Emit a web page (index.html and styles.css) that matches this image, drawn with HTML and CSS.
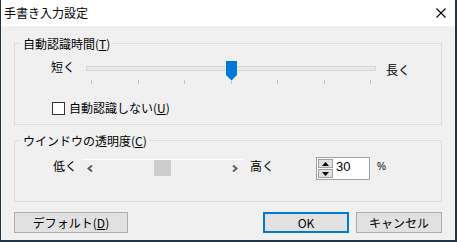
FILE: index.html
```html
<!DOCTYPE html>
<html lang="ja">
<head>
<meta charset="utf-8">
<link rel="stylesheet" href="styles.css">
</head>
<body>
<div class="window">
  <div class="titlebar">
    <span class="title">手書き入力設定</span>
    <svg class="close" width="10" height="10" viewBox="0 0 10 10"><path d="M0.5 0.5L9.5 9.5M9.5 0.5L0.5 9.5" stroke="#000" stroke-width="1.1" fill="none"/></svg>
  </div>
  <div class="content">
    <fieldset class="group g1">
      <legend>自動認識時間(<u>T</u>)</legend>
      <div class="slider-row">
        <span class="lbl lbl-short">短く</span>
        <div class="slider">
          <div class="track"></div>
          <svg class="thumb" width="11" height="19" viewBox="0 0 11 19"><polygon points="0,0 11,0 11,14 6,19 5,19 0,14" fill="#0078d7"/></svg>
          <div class="ticks"><i></i><i></i><i></i><i></i><i></i><i></i><i></i></div>
        </div>
        <span class="lbl lbl-long">長く</span>
      </div>
      <div class="check-row">
        <span class="box"></span>
        <span class="lbl">自動認識しない(<u>U</u>)</span>
      </div>
    </fieldset>
    <fieldset class="group g2">
      <legend>ウインドウの透明度(<u>C</u>)</legend>
      <div class="opacity-row">
        <span class="lbl lbl-low">低く</span>
        <div class="scrollbar">
          <span class="sb-btn"><svg width="7" height="7" viewBox="0 0 7 7"><path d="M5 0.5L1.5 3.5L5 6.5" stroke="#606060" stroke-width="2" fill="none"/></svg></span>
          <div class="sb-track"><span class="sb-thumb"></span></div>
          <span class="sb-btn"><svg width="7" height="7" viewBox="0 0 7 7"><path d="M2 0.5L5.5 3.5L2 6.5" stroke="#606060" stroke-width="2" fill="none"/></svg></span>
        </div>
        <span class="lbl lbl-high">高く</span>
        <div class="spin">
          <span class="spin-btn"><svg width="7" height="4" viewBox="0 0 7 4"><polygon points="3.5,0 7,4 0,4" fill="#000"/></svg></span>
          <span class="spin-btn"><svg width="7" height="4" viewBox="0 0 7 4"><polygon points="0,0 7,0 3.5,4" fill="#000"/></svg></span>
        </div>
        <div class="edit">30</div>
        <span class="pct">%</span>
      </div>
    </fieldset>
    <div class="buttons">
      <button class="btn btn-default">デフォルト(<u>D</u>)</button>
      <span class="spacer"></span>
      <button class="btn btn-ok">OK</button>
      <button class="btn btn-cancel">キャンセル</button>
    </div>
  </div>
</div>
</body>
</html>
```

FILE: styles.css
```css
* { box-sizing: border-box; }
html, body {
  margin: 0;
  padding: 0;
  width: 457px;
  height: 242px;
  overflow: hidden;
  background: #243447;
}
body {
  font-family: "Noto Sans CJK JP", "Noto Sans", sans-serif;
  font-size: 12px;
  color: #000;
}
.window {
  margin-left: 1px;
  width: 454px;
  height: 240px;
  background: #f0f0f0;
  display: flex;
  flex-direction: column;
}
.titlebar {
  height: 26px;
  background: #fff;
  display: flex;
  align-items: center;
  padding-left: 3px;
  padding-right: 9px;
}
.title {
  font-size: 12px;
  line-height: 16px;
  flex: 1;
}
.close { display: block; }
.content {
  padding: 9px 13px 0 13px;
  display: flex;
  flex-direction: column;
}
.group {
  margin: 0;
  border: 1px solid #dcdcdc;
  padding: 0;
  min-width: 0;
}
.group legend {
  margin-left: 6px;
  padding: 0 2px;
  line-height: 17px;
  height: 17px;
}
.lbl { line-height: 16px; white-space: nowrap; }
.g1 { padding-top: 7px; padding-bottom: 8px; }
.slider-row {
  display: flex;
  align-items: flex-start;
  height: 26px;
  margin-left: 36px;
}
.lbl-short { width: 35px; }
.slider {
  position: relative;
  width: 290px;
  height: 24px;
  margin-top: 2px;
}
.track {
  position: absolute;
  left: 0;
  right: 0;
  top: 5px;
  height: 5px;
  background: #e7eaea;
  border: 1px solid #d6d6d6;
}
.thumb {
  position: absolute;
  left: 140px;
  top: 0;
  display: block;
}
.ticks {
  position: absolute;
  left: 5px;
  right: 5px;
  top: 19px;
  height: 4px;
  display: flex;
  justify-content: space-between;
}
.ticks i {
  display: block;
  width: 1px;
  height: 4px;
  background: #c4c4c4;
}
.lbl-long { margin-left: 10px; margin-top: 3px; }
.check-row {
  display: flex;
  align-items: center;
  height: 16px;
  margin-top: 15px;
  margin-left: 36px;
}
.box {
  width: 13px;
  height: 13px;
  border: 1px solid #333;
  background: #fff;
  margin-left: 1px;
  margin-right: 4px;
}
.g2 { margin-top: 7px; padding-top: 8px; padding-bottom: 21px; }
.opacity-row {
  display: flex;
  align-items: flex-start;
  height: 23px;
  margin-left: 36px;
}
.lbl-low { margin-left: 2px; width: 29px; margin-top: 1px; }
.scrollbar {
  display: flex;
  width: 161px;
  height: 17px;
  margin-top: 2px;
  border-top: 1px solid #fff;
  background: #f0f0f0;
}
.sb-btn {
  width: 17px;
  height: 16px;
  display: flex;
  align-items: center;
  justify-content: center;
}
.sb-btn svg { display: block; }
.sb-track { flex: 1; position: relative; padding-left: 55px; }
.sb-thumb {
  display: block;
  width: 17px;
  height: 16px;
  background: #cdcdcd;
}
.lbl-high { margin-left: 7px; width: 66px; margin-top: 1px; }
.spin {
  width: 18px;
  height: 23px;
  border: 1px solid #a0a0a0;
  border-right: none;
  padding: 1px;
  display: flex;
  flex-direction: column;
  gap: 1px;
  background: #fff;
}
.spin-btn {
  flex: 1;
  background: #e1e1e1;
  border: 1px solid #a0a0a0;
  display: flex;
  align-items: center;
  justify-content: center;
}
.spin-btn svg { display: block; }
.edit {
  width: 36px;
  height: 23px;
  border: 1px solid #a0a0a0;
  border-left: none;
  background: #fff;
  font-family: "Liberation Sans", Arial, sans-serif;
  font-size: 13px;
  line-height: 17px;
  padding-left: 2px;
}
.pct {
  margin-left: 7px;
  margin-top: 2px;
  font-family: "Liberation Sans", Arial, sans-serif;
  font-size: 10px;
  line-height: 16px;
}
.buttons {
  display: flex;
  margin-top: 10px;
}
.btn {
  height: 21px;
  margin: 0;
  padding: 0;
  background: #e1e1e1;
  border: 1px solid #adadad;
  font-family: "Noto Sans CJK JP", "Noto Sans", sans-serif;
  font-size: 12px;
  line-height: 17px;
  color: #000;
}
.btn-default { width: 114px; }
.spacer { flex: 1; }
.btn-ok { width: 86px; border: 2px solid #0078d7; }
.btn-cancel { width: 86px; margin-left: 7px; }
```
